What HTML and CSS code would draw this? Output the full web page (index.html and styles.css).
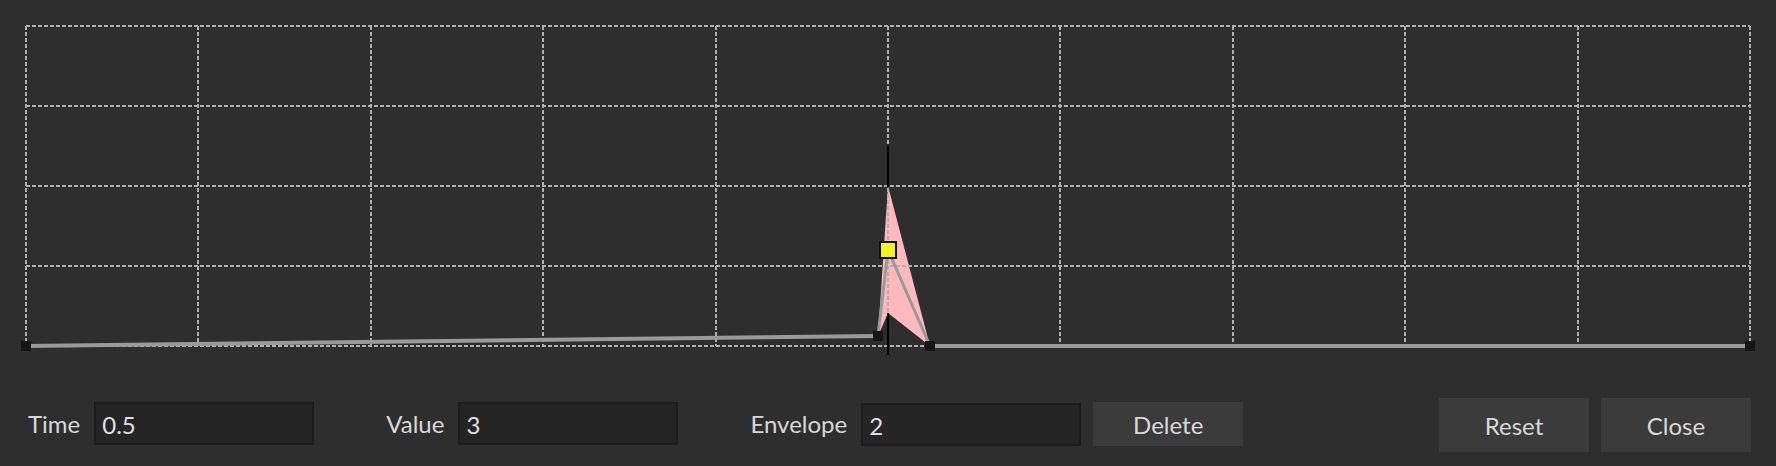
FILE: index.html
```html
<!DOCTYPE html>
<html>
<head>
<meta charset="utf-8">
<link rel="stylesheet" href="styles.css">
</head>
<body>
<div class="editor">
  <svg class="graph" width="1776" height="398" viewBox="0 0 1776 398">
    <polygon class="hull" points="888,186 930,346 888,313 878,336"/>
    <g class="grid">
      <line x1="26" y1="26" x2="1750" y2="26"/>
      <line x1="26" y1="106" x2="1750" y2="106"/>
      <line x1="26" y1="186" x2="1750" y2="186"/>
      <line x1="26" y1="266" x2="1750" y2="266"/>
      <line x1="26" y1="346" x2="1750" y2="346"/>
      <line x1="26" y1="26" x2="26" y2="346"/>
      <line x1="198" y1="26" x2="198" y2="346"/>
      <line x1="371" y1="26" x2="371" y2="346"/>
      <line x1="543" y1="26" x2="543" y2="346"/>
      <line x1="716" y1="26" x2="716" y2="346"/>
      <line x1="888" y1="26" x2="888" y2="346"/>
      <line x1="1060" y1="26" x2="1060" y2="346"/>
      <line x1="1233" y1="26" x2="1233" y2="346"/>
      <line x1="1405" y1="26" x2="1405" y2="346"/>
      <line x1="1578" y1="26" x2="1578" y2="346"/>
      <line x1="1750" y1="26" x2="1750" y2="346"/>
    </g>
    <line class="cursor" x1="888" y1="145" x2="888" y2="187"/>
    <line class="cursor" x1="888" y1="313" x2="888" y2="355"/>
    <polyline class="curve" points="26,346 878,336"/>
    <polyline class="curve" points="930,346 1750,346"/>
    <polyline class="handle" points="878,336 888,250 930,346"/>
    <rect class="knot" x="21" y="341" width="10" height="10"/>
    <rect class="knot" x="873" y="331" width="10" height="10"/>
    <rect class="knot" x="925" y="341" width="10" height="10"/>
    <rect class="knot" x="1745" y="341" width="10" height="10"/>
    <rect class="sel" x="880" y="242" width="16" height="16"/>
  </svg>
  <div class="controls">
    <div class="field">
      <label class="lbl">Time</label>
      <input class="inp" type="text" value="0.5">
    </div>
    <div class="field">
      <label class="lbl">Value</label>
      <input class="inp" type="text" value="3">
    </div>
    <div class="field">
      <label class="lbl">Envelope</label>
      <input class="inp" type="text" value="2">
      <button class="btn btn-small">Delete</button>
    </div>
    <div class="spacer"></div>
    <button class="btn btn-big">Reset</button>
    <button class="btn btn-big">Close</button>
  </div>
</div>
</body>
</html>
```

FILE: styles.css
```css
html, body {
  margin: 0;
  padding: 0;
  background: #2e2e2e;
}

body {
  width: 1776px;
  height: 466px;
  overflow: hidden;
  font-family: Lato, "Liberation Sans", sans-serif;
  color: #d8d8d8;
}

.editor {
  display: flex;
  flex-direction: column;
}

.graph {
  display: block;
}

.grid line {
  stroke: #b0b0b0;
  stroke-width: 2;
  stroke-dasharray: 4 2;
}

.hull {
  fill: #ffb8bc;
}

.cursor {
  stroke: #000;
  stroke-width: 2;
}

.curve {
  fill: none;
  stroke: #9a9a9a;
  stroke-width: 4;
}

.handle {
  fill: none;
  stroke: #9a9a9a;
  stroke-width: 3;
}

.knot {
  fill: #161616;
}

.sel {
  fill: #f2f224;
  stroke: #111;
  stroke-width: 2;
}

.controls {
  display: flex;
  align-items: flex-start;
  height: 54px;
  padding: 0 25px 0 28px;
}

.field {
  display: flex;
  align-items: center;
  margin-top: 4px;
  margin-right: 72px;
}

.field:last-of-type {
  margin-right: 0;
}

.lbl {
  font-size: 24px;
  margin-right: 14px;
  line-height: 1;
}

.inp {
  box-sizing: border-box;
  width: 220px;
  height: 43px;
  background: #252525;
  border: 2px solid #1c1c1c;
  color: #e0e0e0;
  font-family: Lato, "Liberation Sans", sans-serif;
  font-size: 24px;
  padding: 2px 6px 0;
  outline: none;
}

.btn {
  box-sizing: border-box;
  width: 150px;
  border: none;
  background: #3b3b3b;
  color: #d8d8d8;
  font-family: Lato, "Liberation Sans", sans-serif;
  font-size: 24px;
  padding: 0;
}

.btn-small {
  height: 44px;
  margin-left: 12px;
}

.btn-big {
  height: 54px;
  margin-left: 12px;
}

.spacer {
  flex: 1;
}
```
